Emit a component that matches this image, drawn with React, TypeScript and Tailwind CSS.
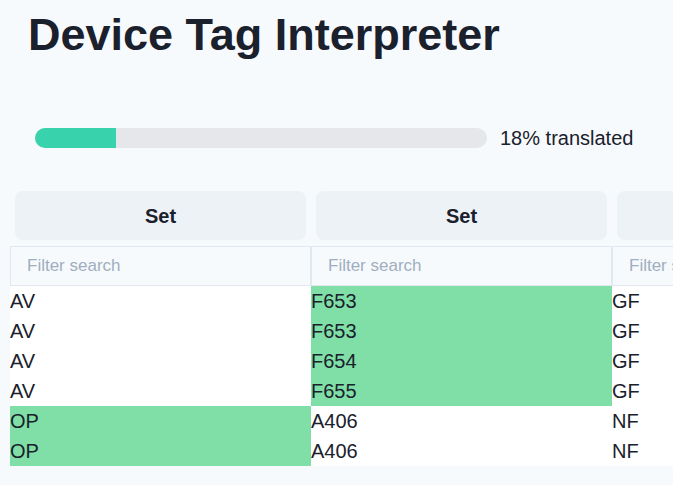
import React from "react";

const cols = [
  { cells: ["AV", "AV", "AV", "AV", "OP", "OP"], hl: [false, false, false, false, true, true] },
  { cells: ["F653", "F653", "F654", "F655", "A406", "A406"], hl: [true, true, true, true, false, false] },
  { cells: ["GF", "GF", "GF", "GF", "NF", "NF"], hl: [false, false, false, false, false, false] },
];

export default function App() {
  return (
    <div
      className="w-[673px] h-[485px] overflow-hidden bg-[#f7fafc] text-[#1a202c]"
      style={{ fontFamily: '"Liberation Sans", Arial, sans-serif' }}
    >
      <h1 className="ml-[28px] pt-[12px] text-[45px] leading-[45px] font-bold">Device Tag Interpreter</h1>
      <div className="mt-[71px] ml-[35px] flex items-center h-[20px]">
        <div className="w-[452px] h-[20px] rounded-full bg-[#e5e7eb] overflow-hidden">
          <div className="h-full w-[18%] bg-[#38d3ac]" />
        </div>
        <span className="ml-[13px] text-[20px] leading-[20px]">18% translated</span>
      </div>
      <div className="mt-[43px] ml-[10px] flex w-[1000px]">
        {cols.map((c, i) => (
          <div key={i} className="w-[301px] shrink-0 flex flex-col">
            <div className="px-[5px]">
              <button className="w-full h-[49px] rounded-lg bg-[#edf2f7] text-[20px] font-bold text-[#1a202c]">
                Set
              </button>
            </div>
            <input
              className="mt-[6px] h-[40px] w-full border border-[#e2e8f0] bg-[#f7fafc] px-[16px] text-[17px] placeholder-[#a0aec0] outline-none"
              placeholder="Filter search"
            />
            {c.cells.map((t, j) => (
              <div
                key={j}
                className={`h-[30px] text-[20px] leading-[30px] ${c.hl[j] ? "bg-[#7fdfa6]" : "bg-white"}`}
              >
                {t}
              </div>
            ))}
          </div>
        ))}
      </div>
    </div>
  );
}
